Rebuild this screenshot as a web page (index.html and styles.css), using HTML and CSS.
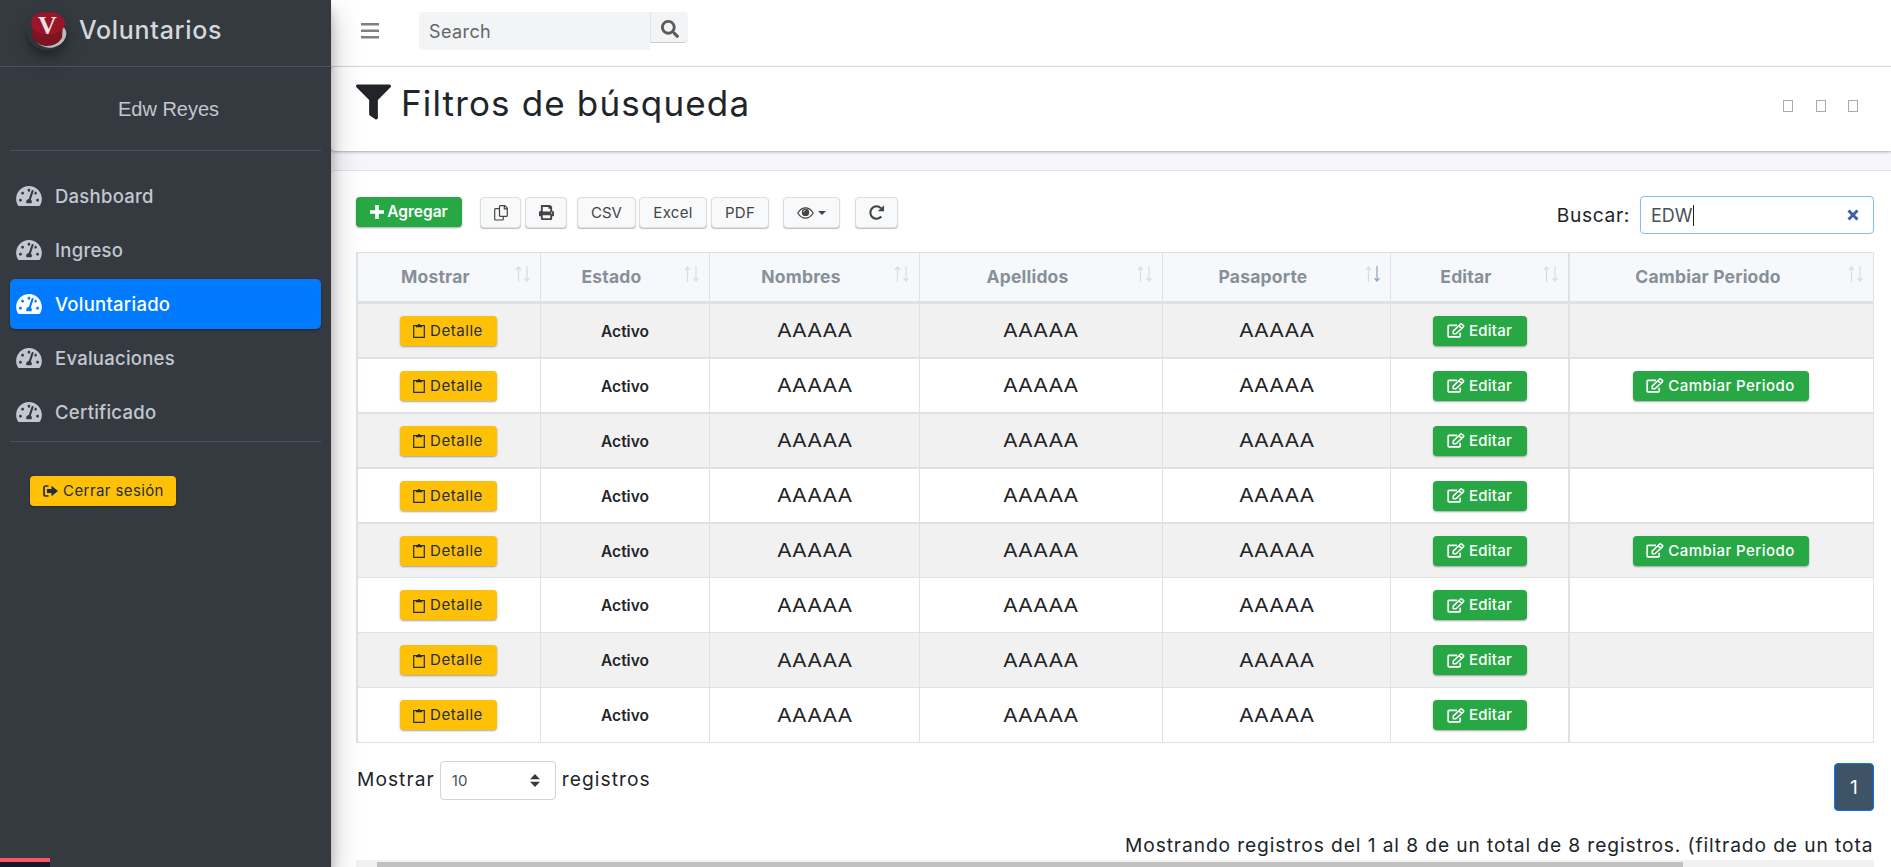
FILE: index.html
```html
<!DOCTYPE html>
<html lang="es">
<head>
<meta charset="utf-8">
<title>Voluntarios</title>
<link rel="stylesheet" href="styles.css">
</head>
<body>
<svg class="defs" aria-hidden="true">
  <symbol id="tacho" viewBox="0 32 576 448"><path d="M288 32C128.94 32 0 160.94 0 320c0 52.8 14.25 102.26 39.06 144.8 5.61 9.62 16.3 15.2 27.44 15.2h443c11.14 0 21.83-5.58 27.44-15.2C561.75 422.26 576 372.8 576 320c0-159.06-128.94-288-288-288zm0 64c14.71 0 26.58 10.13 30.32 23.65-1.11 2.26-2.64 4.23-3.45 6.67l-9.22 27.67c-5.13 3.49-10.97 6.01-17.64 6.01-17.67 0-32-14.33-32-32S270.33 96 288 96zM96 384c-17.67 0-32-14.33-32-32s14.33-32 32-32 32 14.33 32 32-14.33 32-32 32zm48-160c-17.67 0-32-14.33-32-32s14.33-32 32-32 32 14.33 32 32-14.33 32-32 32zm246.77-72.41l-61.33 184C343.13 347.33 352 364.54 352 384c0 11.72-3.38 22.55-8.88 32H232.88c-5.5-9.45-8.88-20.28-8.88-32 0-33.94 26.5-61.43 59.9-63.59l61.34-184.01c4.17-12.56 17.73-19.45 30.36-15.17 12.57 4.19 19.35 17.79 15.17 30.36zm14.66 57.2l15.52-46.55c3.47-1.29 7.13-2.23 11.05-2.23 17.67 0 32 14.33 32 32s-14.33 32-32 32c-11.38-.01-20.89-6.28-26.57-15.22zM480 384c-17.67 0-32-14.33-32-32s14.33-32 32-32 32 14.33 32 32-14.33 32-32 32z"/></symbol>
  <symbol id="clip" viewBox="0 0 12 15"><path fill="none" stroke="currentColor" stroke-width="1.2" d="M3.5 2.600H.7v11.700h10.600V2.600H8.500"/><path d="M3 4.300V2h1.600a1.450 1.450 0 0 1 2.800 0H9v2.300z"/></symbol>
  <symbol id="edit" viewBox="0 0 18 15"><path fill="none" stroke="currentColor" stroke-width="1.700" stroke-linejoin="round" d="M10 2.300H1.900Q1.200 2.300 1.200 3v10Q1.200 13.800 1.900 13.800H12.500Q13.200 13.800 13.200 13V9.800"/><path fill="none" stroke="currentColor" stroke-width="1.500" stroke-linejoin="round" d="M6.200 10.700V8.100L13.400 1.200Q14.200.5 15 1.200L16.300 2.400Q17 3.100 16.300 3.900L9 10.700zM11.900 2.800L14.700 5.400"/></symbol>
  <symbol id="sort" viewBox="0 0 16 16"><path class="up" fill="none" stroke-width="1.200" d="M3.500 16V1M1 3.800L3.500 1 6 3.800"/><path class="down" fill="none" stroke-width="1.200" d="M12 0v15M9.500 12.200L12 15l2.500-2.800"/></symbol>
</svg>

<div class="app">
  <aside class="sidebar">
    <div class="brand">
      <svg class="logo" width="40" height="40" viewBox="0 0 40 40">
        <circle cx="20" cy="20" r="19.500" fill="#30353b"/>
        <ellipse cx="24" cy="25.500" rx="15.500" ry="12" fill="#b9babd" transform="rotate(-14 24 25)"/>
        <path fill="#7d1420" d="M5 12q15-10 31 0l-1 16q-6 9-17 8Q7 34 5 24z"/>
        <path fill="#9b1529" d="M4 13Q4 2 21 2q15 0 17 11 0 9-16 12Q5 24 4 13z"/>
        <text x="20.500" y="24" class="logo-v">V</text>
      </svg>
      <span class="brand-text">Voluntarios</span>
    </div>
    <div class="user">Edw Reyes</div>
    <nav class="nav">
      <a class="nav-item"><svg class="nav-icon"><use href="#tacho"/></svg><span>Dashboard</span></a>
      <a class="nav-item"><svg class="nav-icon"><use href="#tacho"/></svg><span>Ingreso</span></a>
      <a class="nav-item active"><svg class="nav-icon"><use href="#tacho"/></svg><span>Voluntariado</span></a>
      <a class="nav-item"><svg class="nav-icon"><use href="#tacho"/></svg><span>Evaluaciones</span></a>
      <a class="nav-item"><svg class="nav-icon"><use href="#tacho"/></svg><span>Certificado</span></a>
    </nav>
    <button class="btn warn logout"><svg width="15" height="12" viewBox="0 0 15 12"><path fill="none" stroke="currentColor" stroke-width="1.700" d="M5.500 1H2.800Q1 1 1 2.800v6.400Q1 11 2.800 11h2.700"/><path d="M4 4h4.500V.8L15 6l-6.500 5.200V8H4z"/></svg><span>Cerrar sesión</span></button>
    <div class="corner"><i></i></div>
  </aside>

  <main class="main">
    <header class="topbar">
      <svg class="bars" width="18" height="16" viewBox="0 0 18 16"><path d="M0 0h18v2.400H0zM0 6.500h18v2.400H0zM0 13h18v2.400H0z"/></svg>
      <div class="search">Search</div>
      <div class="search-btn"><svg width="18" height="18" viewBox="0 0 512 512"><path d="M505 442.700L405.300 343c-4.500-4.500-10.600-7-17-7H372c27.600-35.300 44-79.700 44-128C416 93.100 322.900 0 208 0S0 93.100 0 208s93.100 208 208 208c48.300 0 92.700-16.400 128-44v16.300c0 6.400 2.500 12.500 7 17l99.700 99.700c9.400 9.400 24.600 9.400 33.900 0l28.300-28.300c9.400-9.400 9.400-24.600.1-34zM208 336c-70.700 0-128-57.200-128-128 0-70.700 57.200-128 128-128 70.700 0 128 57.200 128 128 0 70.700-57.200 128-128 128z"/></svg></div>
    </header>

    <section class="card filters">
      <h3><svg width="35" height="36" viewBox="0 0 512 512"><path d="M487.976 0H24.028C2.710 0-8.047 25.866 7.058 40.971L192 225.941V432c0 7.831 3.821 15.170 10.237 19.662l80 55.980C298.020 518.690 320 507.493 320 487.980V225.941l184.947-184.970C520.021 25.896 509.338 0 487.976 0z"/></svg><span>Filtros de búsqueda</span></h3>
      <div class="tools"><i></i><i></i><i></i></div>
    </section>

    <section class="card listing">
      <div class="toolbar">
        <button class="btn success add"><svg width="14" height="14" viewBox="0 0 14 14"><path d="M5.200 0h3.600v5.200H14v3.600H8.800V14H5.200V8.800H0V5.200h5.200z"/></svg><span>Agregar</span></button>
        <button class="btn light copy"><svg width="14" height="16" viewBox="0 0 14 16"><path fill="none" stroke="currentColor" stroke-width="1.200" stroke-linejoin="round" d="M6.200.7H10.800L13.300 3.200V10.600Q13.300 11.300 12.600 11.300H6.200Q5.500 11.300 5.500 10.600V1.400Q5.500.7 6.200.7zM10.300.7V3.800H13.300M5.500 3.700H1.400Q.7 3.700.7 4.400V14.300Q.7 15 1.400 15H8.600Q9.300 15 9.300 14.300V11.300"/></svg></button>
        <button class="btn light print"><svg width="15" height="15" viewBox="0 0 512 512"><path d="M448 192V77.250c0-8.490-3.370-16.620-9.370-22.630L393.370 9.370c-6-6-14.140-9.370-22.630-9.370H96C78.330 0 64 14.330 64 32v160c-35.350 0-64 28.650-64 64v112c0 8.840 7.160 16 16 16h48v96c0 17.670 14.330 32 32 32h320c17.670 0 32-14.330 32-32v-96h48c8.840 0 16-7.160 16-16V256c0-35.350-28.650-64-64-64zm-64 256H128v-96h256v96zm0-224H128V64h192v48c0 8.840 7.160 16 16 16h48v96zm48 72c-13.250 0-24-10.750-24-24 0-13.260 10.750-24 24-24s24 10.740 24 24c0 13.250-10.750 24-24 24z"/></svg></button>
        <button class="btn light csv">CSV</button>
        <button class="btn light excel">Excel</button>
        <button class="btn light pdf">PDF</button>
        <button class="btn light eye"><svg width="17" height="12" viewBox="0 0 17 12"><path fill="none" stroke="currentColor" stroke-width="1.200" d="M.8 6Q4 .8 8.500.8T16.200 6Q13 11.200 8.500 11.200T.8 6z"/><circle cx="8.500" cy="5.400" r="3.700"/><path fill="none" stroke="#f8f9fa" stroke-width=".8" d="M6.500 5.200q.1-1.900 2-2"/></svg><svg class="caret" width="8" height="4" viewBox="0 0 8 4"><path d="M0 0h8L4 4z"/></svg></button>
        <button class="btn light reload"><svg width="15" height="15" viewBox="0 0 15 15"><path fill="none" stroke="currentColor" stroke-width="2.100" d="M12.300 11.500A6.200 6.200 0 1 1 12 3.200"/><path d="M15 .2V6.300H8.800z"/></svg></button>
        <label class="find"><span>Buscar:</span><span class="field"><span class="value">EDW</span><svg width="12" height="12" viewBox="0 0 12 12"><path fill="none" stroke="#3f62a5" stroke-width="3" d="M1.500 1.500l9 9m0-9l-9 9"/></svg></span></label>
      </div>

      <table class="grid">
        <colgroup><col class="c1"><col class="c2"><col class="c3"><col class="c4"><col class="c5"><col class="c6"><col class="c7"></colgroup>
        <thead><tr>
          <th><div><span>Mostrar</span><svg><use href="#sort"/></svg></div></th>
          <th><div><span>Estado</span><svg><use href="#sort"/></svg></div></th>
          <th><div><span>Nombres</span><svg><use href="#sort"/></svg></div></th>
          <th><div><span>Apellidos</span><svg><use href="#sort"/></svg></div></th>
          <th class="sorted"><div><span>Pasaporte</span><svg><use href="#sort"/></svg></div></th>
          <th><div><span>Editar</span><svg><use href="#sort"/></svg></div></th>
          <th><div><span>Cambiar Periodo</span><svg><use href="#sort"/></svg></div></th>
        </tr></thead>
        <tbody id="rows"></tbody>
      </table>

      <div class="pager">
        <div class="length"><span>Mostrar</span><span class="select">10<svg width="10" height="13" viewBox="0 0 10 13"><path d="M0 5.300h10L5 0zM0 7.700h10L5 13z"/></svg></span><span class="reg">registros</span></div>
        <span class="page">1</span>
      </div>
      <div class="info">Mostrando registros del 1 al 8 de un total de 8 registros. (filtrado de un total</div>
      <div class="scroll"><i></i></div>
    </section>
  </main>
</div>
<script src="rows.js"></script>
</body>
</html>
```

FILE: rows.js
```js
const renewable = [false, true, false, false, true, false, false, false];
const edit = (label, cls) =>
  `<button class="btn success ${cls}"><svg width="18" height="15"><use href="#edit"/></svg><span>${label}</span></button>`;
const name = `<td class="name"><span>AAAAA</span></td>`;
document.getElementById("rows").innerHTML = renewable.map(r => `<tr>
  <td><button class="btn warn detail"><svg width="12" height="15"><use href="#clip"/></svg><span>Detalle</span></button></td>
  <td class="state">Activo</td>
  ${name}${name}${name}
  <td>${edit("Editar", "edit")}</td>
  <td>${r ? edit("Cambiar Periodo", "period") : ""}</td>
</tr>`).join("");
```

FILE: styles.css
```css
* { box-sizing: border-box; }
body {
  margin: 0;
  height: 867px;
  overflow: hidden;
  background: #f4f6f9;
  color: #212529;
  font: 19.2px/30px Inter, "Liberation Sans", sans-serif;
}
svg { fill: currentColor; flex: none; }
.defs { position: absolute; width: 0; height: 0; }
.app { display: grid; grid-template-columns: 331px 1fr; height: 867px; }

.sidebar {
  position: relative;
  z-index: 2;
  background: #353a41;
  color: #c2c7d0;
  box-shadow: 0 14px 28px rgba(0,0,0,.25), 0 10px 10px rgba(0,0,0,.22);
}
.brand { display: flex; height: 67px; padding: 10px 0 0 27px; border-bottom: 1px solid #4b545c; }
.logo { border-radius: 50%; box-shadow: 0 10px 20px rgba(0,0,0,.19), 0 6px 6px rgba(0,0,0,.23); }
.logo-v { font: bold 26px "Liberation Serif", serif; fill: #e6e3e6; text-anchor: middle; }
.brand-text { margin-left: 12px; padding-top: 5px; font-size: 25px; font-weight: 500; letter-spacing: .7px; color: #d5d7da; }
.user {
  height: 84px;
  margin: 0 10px;
  padding: 27px 0 0 6px;
  border-bottom: 1px solid #4b545c;
  text-align: center;
  font-family: "Liberation Sans", sans-serif;
  font-size: 20px;
}
.nav { display: flex; flex-direction: column; gap: 4px; margin: 0 10px; padding: 20px 0 4px; border-bottom: 1px solid #4b545c; height: 291px; }
.nav-item { display: flex; align-items: center; height: 50px; padding-left: 6px; border-radius: 5px; font-weight: 500; font-size: 18.500px; letter-spacing: .25px; }
.nav-icon { width: 26px; height: 20px; margin-right: 13px; }
.active { background: #007bff; color: #fff; box-shadow: 0 1px 3px rgba(0,0,0,.12), 0 1px 2px rgba(0,0,0,.24); }
.btn {
  display: inline-flex;
  align-items: center;
  justify-content: center;
  height: 30px;
  padding: 0;
  border: 0;
  border-radius: 4px;
  font: 500 15px/20px Inter, sans-serif;
  box-shadow: 0 1px 2px rgba(0,0,0,.35);
}
.warn { background: #ffc107; color: #1f2d3d; font-weight: 400; }
.success { background: #28a745; color: #fff; }
.light { height: 31px; border: 1px solid #ddd; background: #f8f9fa; color: #444; font-weight: 400; box-shadow: 0 1px 1px rgba(0,0,0,.25); }
.logout { width: 146px; margin: 34px 0 0 30px; padding-left: 1px; gap: 5px; letter-spacing: .4px; }
.corner { position: absolute; left: 0; bottom: 0; width: 50px; height: 10px; overflow: hidden; border-top: 4px solid #fa5560; background: #151a2b; }
.corner i { display: block; width: 8px; height: 8px; margin: 5px 0 0 12px; border-radius: 50%; background: #d33; }

.main { min-width: 0; }
.topbar { display: flex; height: 67px; padding: 12px 0 0 30px; border-bottom: 1px solid #dee2e6; background: #fff; }
.bars { margin-top: 11px; color: #7f7f7f; }
.search { width: 231px; height: 38px; margin-left: 40px; padding: 5px 10px; border-radius: 4px 0 0 4px; background: #f2f4f6; color: #666; font-size: 18px; letter-spacing: .4px; }
.search-btn { width: 38px; height: 31px; padding: 8px 0 0 10px; border-left: 1px solid #e3e5e7; border-bottom: 1px solid #c9cbcd; border-radius: 0 4px 5px 0; background: #f2f4f6; color: #5b5b5b; line-height: 0; }
.card { background: #fff; }
.filters { display: flex; justify-content: space-between; height: 84px; padding: 17px 33px 0 25px; border-radius: 4px 0 0 4px; box-shadow: 0 0 1px rgba(0,0,0,.125), 0 1px 3px rgba(0,0,0,.3); }
h3 { display: flex; gap: 10px; margin: 0; font-weight: 400; font-size: 35px; line-height: 38px; letter-spacing: 1.150px; }
.tools { display: flex; gap: 22.500px; padding-top: 16px; }
.tools i { width: 10px; height: 12px; border: 1px solid #aaa; }
.listing { height: 698px; margin-top: 19px; padding: 26px 17px 0 25px; border-top: 1px solid #e0e3e7; border-radius: 4px 0 0 0; }

.toolbar { display: flex; height: 55px; }
.add { width: 106px; margin-right: 18px; gap: 3px; font-size: 15.500px; font-weight: 600; }
.copy { width: 41px; margin-right: 4px; }
.print { width: 42px; margin-right: 10px; }
.csv { width: 59px; margin-right: 3px; }
.excel { width: 68px; margin-right: 4px; letter-spacing: .3px; }
.pdf { width: 58px; margin-right: 14px; letter-spacing: .3px; }
.eye { width: 57px; margin-right: 15px; gap: 4px; }
.reload { width: 43px; }
.find { display: flex; margin: -1px 0 0 auto; gap: 10px; line-height: 38px; letter-spacing: .65px; }
.field { display: flex; align-items: center; justify-content: space-between; width: 234px; height: 38px; padding: 0 14px 0 10px; border: 1px solid #80bdff; border-radius: 4px; color: #495057; font-size: 18px; letter-spacing: 0; }
.value { height: 21px; border-right: 1px solid #222; line-height: 21px; }

.grid { width: 1518px; table-layout: fixed; border-collapse: separate; border-spacing: 0; border-bottom: 1px solid #dee2e6; border-right: 1px solid #dee2e6; }
.c1 { width: 184px; } .c2 { width: 169px; } .c3 { width: 210px; } .c4 { width: 243px; }
.c5 { width: 228px; } .c6 { width: 178px; } .c7 { width: 305px; }
th, td { padding: 0; border: 0 solid #dee2e6; border-left-width: 1px; text-align: center; }
th:first-child, td:first-child, th:last-child, td:last-child { border-left-width: 2px; }
td:first-child, td:last-child { padding-right: 2px; }
th { height: 49px; border-top-width: 1px; background: #f6f8fc; color: #87909a; font-size: 17.500px; font-weight: 700; letter-spacing: .2px; }
th div { position: relative; padding-right: 27px; }
th svg { position: absolute; right: 9px; top: 4px; width: 16px; height: 16px; }
.up { stroke: #d9dce0; }
.down { stroke: var(--down, #d9dce0); }
.sorted { --down: #8ba3c4; }
td { height: 55px; border-top-width: 2px; }
td .btn { vertical-align: top; }
tbody tr:first-child td { height: 56px; border-top-width: 3px; }
tbody tr:nth-child(n+6) td { border-top-width: 1px; }
tbody tr:nth-child(odd) { background: #f1f1f1; }
.detail { width: 97px; gap: 5px; letter-spacing: .55px; }
.edit { width: 94px; gap: 4px; letter-spacing: .25px; }
.period { width: 176px; gap: 4px; letter-spacing: .45px; }
.state { font-size: 15.500px; font-weight: 600; padding-top: 2px; }
.name { padding-bottom: 1px; }
.name span { display: inline-block; transform: scaleX(1.12); }

.pager { display: flex; justify-content: space-between; height: 86px; padding-top: 18px; }
.length { display: flex; padding-left: 1px; letter-spacing: 1.050px; line-height: 36px; }
.select { display: flex; align-items: center; justify-content: space-between; width: 116px; height: 39px; margin: 0 6px 0 5px; padding: 0 15px 0 11px; border: 1px solid #ced4da; border-radius: 4px; color: #495057; font-size: 15px; letter-spacing: 0; }
.select svg { color: #343a40; }
.page { width: 40px; height: 48px; margin-top: 2px; border: 1px solid #007bff; border-radius: 4px; background: #3f5367; color: #fff; text-align: center; line-height: 46px; }
.info { height: 31px; padding-left: 769px; overflow: hidden; white-space: nowrap; line-height: 32px; letter-spacing: .900px; }
.scroll { height: 7px; padding: 2px 0 0 21px; background: #f1f1f1; }
.scroll i { display: block; width: 1306px; height: 5px; background: #c1c1c1; }
```
